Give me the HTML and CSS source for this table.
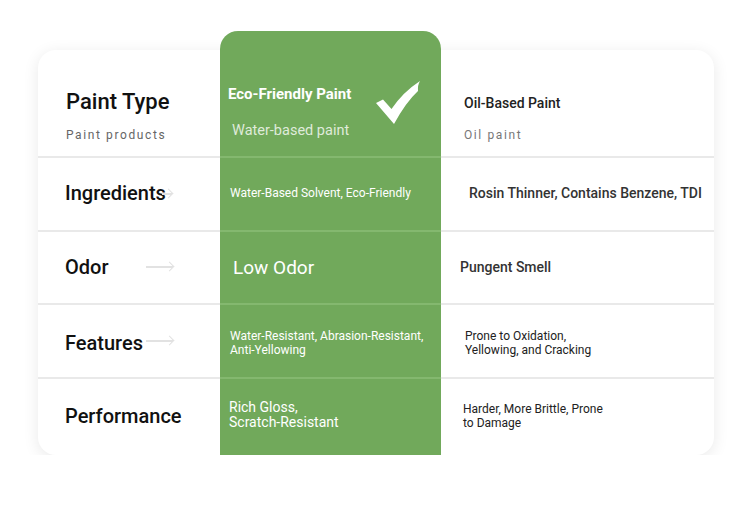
FILE: index.html
```html
<!DOCTYPE html>
<html>
<head>
<meta charset="utf-8">
<link rel="stylesheet" href="styles.css">
</head>
<body>
<div class="card">
  <div class="col col-label">
    <div class="cell head">
      <div class="title">Paint Type</div>
      <div class="sub">Paint products</div>
    </div>
    <div class="cell r1"><span class="label">Ingredients</span><span class="arrow arrow-tight"></span></div>
    <div class="cell r2"><span class="label">Odor</span><span class="arrow"></span></div>
    <div class="cell r3"><span class="label">Features</span><span class="arrow arrow-near"></span></div>
    <div class="cell r4 last"><span class="label">Performance</span></div>
  </div>
  <div class="col col-eco">
    <div class="cell head">
      <div class="eco-text">
        <div class="eco-title">Eco-Friendly Paint</div>
        <div class="eco-sub">Water-based paint</div>
      </div>
      <svg class="check" width="44" height="44" viewBox="0 0 44 44">
        <path d="M0 22 L7 18.5 L15.5 28 Q27 11 44 0 Q41.5 4 42 10 Q30 21 18 43 Z" fill="#fff"/>
      </svg>
    </div>
    <div class="cell r1"><span class="eco-sm">Water-Based Solvent, Eco-Friendly</span></div>
    <div class="cell r2"><span class="eco-lg">Low Odor</span></div>
    <div class="cell r3"><span class="eco-sm">Water-Resistant, Abrasion-Resistant,<br>Anti-Yellowing</span></div>
    <div class="cell r4 last"><span class="eco-md">Rich Gloss,<br>Scratch-Resistant</span></div>
  </div>
  <div class="col col-oil">
    <div class="cell head">
      <div class="oil-title">Oil-Based Paint</div>
      <div class="sub">Oil paint</div>
    </div>
    <div class="cell r1"><span class="oil-md shift-r">Rosin Thinner, Contains Benzene, TDI</span></div>
    <div class="cell r2"><span class="oil-md shift-l">Pungent Smell</span></div>
    <div class="cell r3"><span class="oil-sm shift-r1">Prone to Oxidation,<br>Yellowing, and Cracking</span></div>
    <div class="cell r4 last"><span class="oil-sm">Harder, More Brittle, Prone<br>to Damage</span></div>
  </div>
</div>
</body>
</html>
```
FILE: styles.css
```css
* { box-sizing: border-box; }
html, body { margin: 0; background: #fff; }
body {
  padding: 50px 0 0 38px;
  font-family: Roboto, "Noto Sans", sans-serif;
}
.card {
  width: 676px;
  height: 405px;
  display: flex;
  background: #fff;
  border-radius: 18px;
  box-shadow: 0 3px 16px rgba(0,0,0,0.09);
}
.col { display: flex; flex-direction: column; }
.col-label { width: 182px; }
.col-eco {
  width: 221px;
  margin-top: -19px;
  padding-top: 19px;
  background: #71a95b;
  border-radius: 18px 18px 0 0;
}
.col-oil { flex: 1; }

.cell {
  display: flex;
  align-items: center;
  border-bottom: 2px solid #e9e9e9;
}
.col-eco .cell { border-bottom-color: #84b86f; }
.cell.last { border-bottom: none; }
.head { height: 108px; flex-direction: column; align-items: flex-start; }
.r1 { height: 74px; padding-bottom: 2px; }
.r2 { height: 73px; padding-bottom: 2px; }
.r3 { height: 74px; padding-top: 4px; }
.r4 { height: 76px; padding-bottom: 2px; }

/* label column */
.col-label .cell { padding-left: 27px; }
.col-label .head { padding-top: 39px; padding-left: 28px; }
.title { font-size: 22px; line-height: 26px; font-weight: 500; color: #111; }
.sub {
  margin-top: 13px;
  font-size: 12px;
  line-height: 14px;
  letter-spacing: 1.6px;
  color: #666;
}
.label { font-size: 20px; font-weight: 500; color: #111; }
.arrow {
  display: block;
  width: 27px;
  height: 2px;
  margin-left: 38px;
  background: #e2e2e2;
  position: relative;
}
.arrow::after {
  content: "";
  position: absolute;
  right: 0;
  top: -3px;
  width: 6px;
  height: 6px;
  border-top: 1.5px solid #e2e2e2;
  border-right: 1.5px solid #e2e2e2;
  transform: rotate(45deg);
}
.arrow-tight { width: 10px; margin-left: -4px; margin-top: 1px; }
.arrow-near { margin-left: 3px; margin-top: -4px; }

/* eco column */
.col-eco .cell { padding-left: 10px; color: #fff; }
.col-eco .head {
  flex-direction: row;
  align-items: flex-start;
  padding-top: 35px;
  padding-left: 8px;
}
.eco-text { display: flex; flex-direction: column; }
.eco-title { font-size: 15px; line-height: 18px; font-weight: 700; color: #fff; }
.eco-sub {
  margin-top: 19px;
  margin-left: 4px;
  font-size: 14.5px;
  line-height: 18px;
  color: rgba(255,255,255,0.78);
}
.check { margin-left: auto; margin-right: 21px; margin-top: -4px; }
.eco-sm { font-size: 12px; line-height: 14px; color: #fff; }
.eco-lg { font-size: 19px; color: #fff; margin-left: 3px; margin-top: 2px; }
.eco-md { font-size: 14px; line-height: 15px; color: #fff; }
.col-eco .r1 { padding-bottom: 3px; }
.col-eco .r4 { padding-left: 9px; padding-bottom: 4px; }

/* oil column */
.col-oil .cell { padding-left: 22px; }
.col-oil .head { padding-top: 44px; padding-left: 23px; }
.oil-title { font-size: 14px; line-height: 18px; font-weight: 500; color: #222; }
.col-oil .sub { margin-top: 16px; color: #777; }
.oil-md { font-size: 14px; font-weight: 500; color: #333; }
.oil-sm { font-size: 12px; line-height: 14px; color: #222; }
.col-oil .r1 { padding-bottom: 3px; }
.shift-r { margin-left: 6px; }
.shift-l { margin-left: -3px; }
.shift-r1 { margin-left: 2px; }
```
